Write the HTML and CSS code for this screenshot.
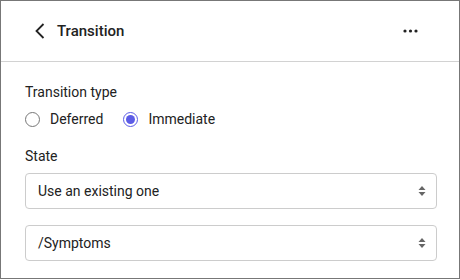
FILE: index.html
```html
<!DOCTYPE html>
<html lang="en">
<head>
    <meta charset="UTF-8">
    <meta name="viewport" content="width=device-width, initial-scale=1.0">
    <title>Transition</title>
    <link rel="stylesheet" href="styles.css">
</head>
<body>

    <div class="panel">
        <div class="panel-header">
            <button class="back" aria-label="Back">
                <svg width="10" height="16" viewBox="0 0 10 16">
                    <path d="M8.5 1 L1.5 8 L8.5 15" fill="none" stroke="#222" stroke-width="1.8"/>
                </svg>
            </button>
            <h1>Transition</h1>
            <button class="more" aria-label="More">
                <svg width="16" height="4" viewBox="0 0 16 4">
                    <circle cx="2" cy="2" r="1.6" fill="#222"/>
                    <circle cx="7.5" cy="2" r="1.6" fill="#222"/>
                    <circle cx="13" cy="2" r="1.6" fill="#222"/>
                </svg>
            </button>
        </div>

        <div class="panel-body">
            <div class="field-label">Transition type</div>
            <div class="radio-row">
                <label class="radio">
                    <input type="radio" name="type" value="deferred">
                    <span class="dot"></span>
                    Deferred
                </label>
                <label class="radio">
                    <input type="radio" name="type" value="immediate" checked>
                    <span class="dot"></span>
                    Immediate
                </label>
            </div>

            <div class="field-label state">State</div>
            <div class="select">
                <span>Use an existing one</span>
                <svg width="8" height="14" viewBox="0 0 8 14">
                    <path d="M4 2 L7.5 6 L0.5 6 Z" fill="#666"/>
                    <path d="M4 12 L7.5 8 L0.5 8 Z" fill="#666"/>
                </svg>
            </div>
            <div class="select">
                <span>/Symptoms</span>
                <svg width="8" height="14" viewBox="0 0 8 14">
                    <path d="M4 2 L7.5 6 L0.5 6 Z" fill="#666"/>
                    <path d="M4 12 L7.5 8 L0.5 8 Z" fill="#666"/>
                </svg>
            </div>
        </div>
    </div>

</body>
</html>
```
FILE: styles.css
```css
body {
    font-family: Roboto, 'Liberation Sans', sans-serif;
    background-color: #fff;
    color: #222;
    margin: 0;
    padding: 0;
}
.panel {
    width: 460px;
    height: 279px;
    box-sizing: border-box;
    border: 1px solid #777;
    overflow: hidden;
}
.panel-header {
    display: flex;
    align-items: center;
    height: 60px;
    padding: 0 40px 0 34px;
    border-bottom: 1px solid #d2d2d2;
}
.panel-header button {
    background: none;
    border: none;
    padding: 0;
    display: flex;
    align-items: center;
    cursor: pointer;
}
.back {
    margin-right: 12px;
}
.panel-header h1 {
    flex: 1;
    margin: 0;
    font-size: 15px;
    font-weight: 500;
    color: #222;
}
.more {
    margin-top: -1px;
}
.panel-body {
    padding: 20px 22px 0 24px;
}
.field-label {
    font-size: 14px;
    line-height: 20px;
    color: #222;
}
.field-label.state {
    margin-top: 17px;
}
.radio-row {
    display: flex;
    gap: 20px;
    margin-top: 7px;
    height: 20px;
}
.radio {
    display: flex;
    align-items: center;
    font-size: 14px;
    color: #222;
    cursor: pointer;
}
.radio input {
    display: none;
}
.dot {
    width: 15px;
    height: 15px;
    box-sizing: border-box;
    border: 1px solid #777;
    border-radius: 50%;
    margin-right: 10px;
    display: flex;
    align-items: center;
    justify-content: center;
}
.radio input:checked + .dot {
    border-color: #5c5ce6;
}
.radio input:checked + .dot::after {
    content: '';
    width: 9px;
    height: 9px;
    border-radius: 50%;
    background-color: #5c5ce6;
}
.select {
    display: flex;
    align-items: center;
    justify-content: space-between;
    height: 36px;
    box-sizing: border-box;
    margin-top: 7px;
    padding: 0 10px 0 12px;
    border: 1px solid #ccc;
    border-radius: 4px;
    font-size: 14px;
    color: #222;
}
.select + .select {
    margin-top: 16px;
}
```
